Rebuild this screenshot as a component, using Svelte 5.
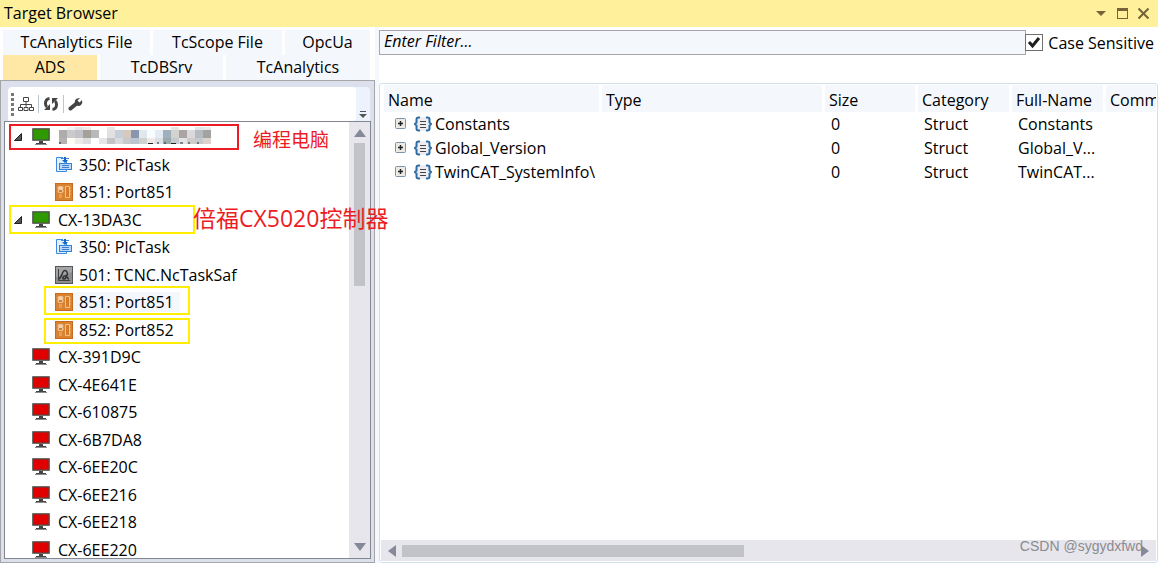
<script>
  const tabs = [
    ["TcAnalytics File", "TcScope File", "OpcUa"],
    ["ADS", "TcDBSrv", "TcAnalytics"],
  ];

  const columns = ["Name", "Type", "Size", "Category", "Full-Name", "Comm"];

  const symbols = [
    { name: "Constants", size: 0, category: "Struct", full: "Constants" },
    { name: "Global_Version", size: 0, category: "Struct", full: "Global_V..." },
    { name: "TwinCAT_SystemInfo\\", size: 0, category: "Struct", full: "TwinCAT..." },
  ];

  const nodes = [
    { kind: "online", open: true, masked: true },
    { kind: "task", label: "350: PlcTask" },
    { kind: "plc", label: "851: Port851" },
    { kind: "online", open: true, label: "CX-13DA3C" },
    { kind: "task", label: "350: PlcTask" },
    { kind: "nc", label: "501: TCNC.NcTaskSaf" },
    { kind: "plc", label: "851: Port851", hover: true },
    { kind: "plc", label: "852: Port852" },
    { kind: "offline", label: "CX-391D9C" },
    { kind: "offline", label: "CX-4E641E" },
    { kind: "offline", label: "CX-610875" },
    { kind: "offline", label: "CX-6B7DA8" },
    { kind: "offline", label: "CX-6EE20C" },
    { kind: "offline", label: "CX-6EE216" },
    { kind: "offline", label: "CX-6EE218" },
    { kind: "offline", label: "CX-6EE220" },
  ];

  // mosaic over the host name, one colour per 8px block
  const mosaic = [
    { y: 0, height: 3, colors: ["#fff", "#f4f4f4", "#e4e4e4", "#ececec", "#fff", "#fff", "#e8e8e8", "#fff", "#fff", "#fff", "#fff", "#fff", "#fff", "#fff", "#e3e6e6", "#fff", "#fff", "#e3e6e6", "#e9eaea"] },
    { y: 3, height: 8, colors: ["#adadad", "#cbc9ca", "#c3c2c8", "#a3a198", "#b8b9bb", "#fff", "#e1e1e4", "#c5ced9", "#d7c9bb", "#8798ae", "#e0e8ec", "#f8fdff", "#e3ecf2", "#9fafbd", "#d2d2cf", "#aca3a3", "#dad9dc", "#b5bbc0", "#a1a39e"] },
    { y: 11, height: 6, colors: ["#b4b1b0", "#fcfbf6", "#eeeae8", "#dcdee2", "#fff", "#e6e6ea", "#c4c4c7", "#d9dadc", "#c8c9cd", "#bac5ce", "#cfd4d2", "#f0e9e6", "#dbdfe6", "#99aaaa", "#c5cad1", "#e1e3e5", "#cfcccb", "#c5cacd", "#dfd2cc"] },
  ];

  let activeTab = $state("ADS");
  let filter = $state("");
  let caseSensitive = $state(true);
</script>

{#snippet monitor(color)}
  <svg class="icon" width="18" height="18" viewBox="0 0 18 18">
    <path d="M0 0h18v13H0z" fill="#8c8c8c" />
    <path d="M1 1h16v11H1z" fill={color} stroke="#4c4c46" />
    <path d="M7 13h4v2h3v2H4v-2h3z" fill="#444" />
    <path d="M3 16h12v1H3z" fill="#8c8c8c" />
  </svg>
{/snippet}

{#snippet nodeIcon(kind)}
  {#if kind === "online"}
    {@render monitor("#2e9a00")}
  {:else if kind === "offline"}
    {@render monitor("#e00000")}
  {:else if kind === "task"}
    <svg class="icon" width="18" height="18" viewBox="0 0 18 18">
      <path d="M1.500 1.500h10v14h-10z" fill="#e3effc" stroke="#3b8ae0" />
      <path d="M8 0h7v5H8z" fill="#fff" />
      <path d="M6 2.500h8" stroke="#3b8ae0" />
      <path d="M9 1h2v3h2l-3 3-3-3h2z" fill="#1468c4" />
      <rect x="4.500" y="7.500" width="12" height="6" fill="#b9d8f9" stroke="#2f82dc" />
      <path d="M7 9.500h7M7 11.500h7" stroke="#3f7fc8" />
    </svg>
  {:else if kind === "plc"}
    <svg class="icon" width="18" height="18" viewBox="0 0 18 18">
      <rect width="18" height="18" fill="#c8691c" />
      <rect x="1" y="1" width="16" height="16" fill="#d9822f" />
      <path d="M3.500 3.500h4v6h-4zM10.500 3.500h4v11h-4z" fill="#d77c2a" stroke="#f0c394" />
      <path d="M4 4h3v3H4z" fill="#f4d2ab" />
      <path d="M2 5h1M2 8h1M8 5h1M8 8h1M15 5h1M15 8h1M15 11h1M4 12h3M4 14h3" stroke="#f0b984" />
    </svg>
  {:else}
    <svg class="icon" width="18" height="18" viewBox="0 0 18 18">
      <rect x="0.500" y="0.500" width="17" height="17" fill="#8b8d8e" stroke="#555758" />
      <path d="M1 1h16v5L1 11z" fill="#a3a5a6" />
      <path d="M3.500 3v11.500H15" fill="none" stroke="#404243" />
      <path d="M4 13c2-1 2-3 4-7 1-2 3-2 4 0 1 3 0 4-2 4s-3 3-1 3 2-3 3-2 1 2 2 2" fill="none" stroke="#303233" stroke-width="1.500" />
    </svg>
  {/if}
{/snippet}

<div class="window">
  <header class="titlebar">
    <h1>Target Browser</h1>
    <button aria-label="Window position">
      <svg width="13" height="13" viewBox="0 0 13 13"><path d="M1 4h10l-5 5z" fill="#75633a" /></svg>
    </button>
    <button aria-label="Maximize">
      <svg width="13" height="13" viewBox="0 0 13 13"><path d="M1 1h11v11H1zM2 4v7h9V4z" fill="#75633a" fill-rule="evenodd" /></svg>
    </button>
    <button aria-label="Close">
      <svg width="13" height="13" viewBox="0 0 13 13"><path d="M1.500 1.500l10 10M11.500 1.500l-10 10" stroke="#75633a" stroke-width="2" /></svg>
    </button>
  </header>

  <div class="body">
    <aside class="targets">
      <div class="tabs" role="tablist">
        {#each tabs as row, i}
          <div class="tab-row row-{i}">
            {#each row as tab}
              <button role="tab" aria-selected={tab === activeTab} class:active={tab === activeTab} onclick={() => (activeTab = tab)}>{tab}</button>
            {/each}
          </div>
        {/each}
      </div>

      <div class="panel">
        <div class="toolbar">
          <div class="tools">
            <span class="grip"></span>
            <button aria-label="Show network">
              <svg width="16" height="16" viewBox="0 0 16 16">
                <path d="M5.500 1.500h5v4h-5zM8 6v5M2.500 11V8.500h11V11M.5 11.500h4v3h-4zM6 11.500h4v3H6zM11.500 11.500h4v3h-4z" fill="none" stroke="#454545" />
              </svg>
            </button>
            <span class="sep"></span>
            <button aria-label="Refresh">
              <svg width="16" height="16" viewBox="0 0 16 16">
                <path d="M4 11Q2.500 10 2.500 7.500q0-4.500 4-5M12 5q1.500 1 1.500 3.500 0 4.500-4 5" fill="none" stroke="#444" stroke-width="3" />
                <path d="M1 14h6V8zM15 2H9v6z" fill="#444" />
              </svg>
            </button>
            <span class="sep"></span>
            <button aria-label="Settings">
              <svg width="16" height="16" viewBox="0 0 16 16">
                <path d="M2.500 12.500L8 8" stroke="#444" stroke-width="4" stroke-linecap="round" />
                <path d="M12 2L9.500 4.500l2 2L14 4q1 3-1 5t-5 0q-2-2-1-4.500T12 2z" fill="#444" />
              </svg>
            </button>
          </div>
          <button class="overflow" aria-label="Toolbar options">
            <svg width="8" height="8" viewBox="0 0 8 8"><path d="M1 1h6v1H1zM0 4h8L4 8z" fill="#555" /></svg>
          </button>
        </div>

        <div class="tree-box">
          <ul class="tree">
            {#each nodes as node}
              <li class={node.kind}>
                <span class="twisty">
                  {#if node.open}
                    <svg width="8" height="8" viewBox="0 0 8 8"><path d="M7.500 .5v7h-7z" fill="#555" stroke="#222" /></svg>
                  {/if}
                </span>
                {@render nodeIcon(node.kind)}
                {#if node.masked}
                  <svg class="mask" width="154" height="20" viewBox="0 0 154 20">
                    {#each mosaic as row}
                      {#each row.colors as color, i}
                        <rect x={i * 8 + 1} y={row.y} width="8" height={row.height} fill={color} />
                      {/each}
                    {/each}
                    <path d="M1 16h2M90 16.500h5M99 16h2M106 16h2M113 16.500h5M122 16h3M130 16h2M139 16h2" stroke="#222" />
                  </svg>
                {:else}
                  <span class="label" class:hover={node.hover}>{node.label}</span>
                {/if}
              </li>
            {/each}
          </ul>
          <div class="scroll-y">
            <svg width="12" height="8" viewBox="0 0 12 8"><path d="M6 0l6 8H0z" fill="#868999" /></svg>
            <span class="thumb"></span>
            <svg class="down" width="12" height="8" viewBox="0 0 12 8"><path d="M0 0h12L6 8z" fill="#868999" /></svg>
          </div>
        </div>
      </div>

      <div class="note local"></div>
      <div class="note controller"></div>
      <div class="note port-a"></div>
      <div class="note port-b"></div>
      <span class="note-text local-text">编程电脑</span>
      <span class="note-text controller-text">倍福CX5020控制器</span>
    </aside>

    <main class="symbols">
      <div class="filter">
        <input type="text" aria-label="Filter" placeholder="Enter Filter..." bind:value={filter} />
        <label>
          <input type="checkbox" bind:checked={caseSensitive} />
          <svg class="tick" width="18" height="17" viewBox="0 0 18 17"><path d="M4 8l3.500 4L14 4" fill="none" stroke="#1e1e1e" stroke-width="3" /></svg>
          Case Sensitive
        </label>
      </div>

      <div class="grid-box">
        <table>
          <colgroup>
            <col class="c-name" /><col class="c-type" /><col class="c-size" />
            <col class="c-cat" /><col class="c-full" /><col />
          </colgroup>
          <thead>
            <tr>
              {#each columns as column}
                <th>{column}</th>
              {/each}
            </tr>
          </thead>
          <tbody>
            {#each symbols as symbol}
              <tr>
                <td>
                  <div class="name">
                    <button class="expand" aria-label="Expand {symbol.name}">
                      <svg width="11" height="11" viewBox="0 0 11 11">
                        <rect x="0.500" y="0.500" width="10" height="10" rx="1" fill="#eceae4" stroke="#7f93a8" />
                        <path d="M3 5.500h5M5.500 3v5" stroke="#222" stroke-width="1.500" />
                      </svg>
                    </button>
                    <svg width="18" height="16" viewBox="0 0 18 16">
                      <path d="M3 1h12v14H3z" fill="#eeeef2" />
                      <path d="M6 1.500H4.500Q2.500 1.500 2.500 3.500v3L1 8l1.500 1.500v3q0 2 2 2H6M12 1.500h1.500q2 0 2 2v3L17 8l-1.500 1.500v3q0 2-2 2H12" fill="none" stroke="#2a6da8" stroke-width="2" />
                      <path d="M6 5.500h6M6 8.500h6M6 11.500h6" stroke="#444" />
                    </svg>
                    <span>{symbol.name}</span>
                  </div>
                </td>
                <td></td>
                <td>{symbol.size}</td>
                <td>{symbol.category}</td>
                <td>{symbol.full}</td>
                <td></td>
              </tr>
            {/each}
          </tbody>
        </table>
        <div class="scroll-x">
          <svg width="8" height="12" viewBox="0 0 8 12"><path d="M8 0v12L0 6z" fill="#868999" /></svg>
          <span class="thumb"></span>
          <svg class="right" width="8" height="12" viewBox="0 0 8 12"><path d="M0 0v12l8-6z" fill="#868999" /></svg>
        </div>
      </div>
      <span class="watermark">CSDN @sygydxfwd</span>
    </main>
  </div>
</div>

<style>
  :global(body) {
    margin: 0;
  }

  .window {
    height: 100vh;
    display: flex;
    flex-direction: column;
    overflow: hidden;
    background: #fff;
    color: #000;
    font: 16px/20px "Open Sans", "Noto Sans CJK SC", sans-serif;
  }

  .window * {
    box-sizing: border-box;
  }

  button {
    padding: 0;
    border: 0;
    background: none;
    color: inherit;
    font: inherit;
  }

  svg {
    display: block;
    flex: none;
  }

  .titlebar {
    flex: none;
    height: 27px;
    display: flex;
    align-items: center;
    gap: 8px;
    padding: 0 8px 0 4px;
    background: #fff09c;
  }

  h1 {
    flex: 1;
    margin: 0;
    padding-bottom: 1px;
    font: inherit;
  }

  .body {
    flex: 1;
    min-height: 0;
    display: flex;
  }

  .targets {
    position: relative;
    flex: none;
    width: 375px;
    display: flex;
    flex-direction: column;
  }

  .tabs {
    padding: 3px 5px 0 3px;
  }

  .tab-row {
    display: grid;
    gap: 3px;
    height: 25px;
  }

  .row-0 {
    grid-template-columns: 147px 129px 1fr;
  }

  .row-1 {
    grid-template-columns: 94px 123px 1fr;
  }

  .tab-row button {
    padding-bottom: 1px;
    background: #f4f7fc;
  }

  .tab-row .active {
    background: #ffe8a6;
  }

  .panel {
    flex: 1;
    min-height: 0;
    display: flex;
    flex-direction: column;
    padding: 6px 3px 3px;
    border: 1px solid #a6a6a9;
    background: #dce0ec;
  }

  .toolbar {
    flex: none;
    height: 34px;
    display: flex;
    margin: 0 1px 0 4px;
    border-radius: 4px 4px 0 0;
    background: #edf3fd;
    overflow: hidden;
  }

  .tools {
    flex: 1;
    display: flex;
    align-items: center;
    gap: 4px;
    padding-left: 3px;
    border-radius: 4px;
    background: #fff;
  }

  .grip {
    width: 3px;
    height: 23px;
    background: repeating-linear-gradient(#777 0 3px, #fff 3px 5px);
  }

  .sep {
    width: 1px;
    height: 18px;
    background: #bfc4d2;
  }

  .overflow {
    display: flex;
    align-items: flex-end;
    justify-content: center;
    width: 14px;
    padding-bottom: 3px;
  }

  .tree-box {
    flex: 1;
    min-height: 0;
    display: flex;
    border: 1px solid #828790;
    background: #fff;
  }

  .tree {
    flex: 1;
    margin: 0;
    padding: 1px 0 0;
    overflow: hidden;
    list-style: none;
  }

  li {
    display: flex;
    align-items: center;
    height: 28px;
    padding-left: 9px;
  }

  li:nth-child(even) {
    height: 27px;
  }

  .twisty {
    width: 18px;
  }

  .task,
  .plc,
  .nc {
    padding-left: 32px;
  }

  .label {
    padding: 0 8px;
  }

  .task .label,
  .plc .label,
  .nc .label {
    padding: 0 6px;
  }

  .hover {
    background: #f4f7fc;
  }

  .mask {
    margin-left: 8px;
  }

  .scroll-y {
    display: flex;
    flex-direction: column;
    align-items: center;
    gap: 6px;
    width: 21px;
    padding: 7px 0;
    background: #e7e6ec;
  }

  .thumb {
    background: #c2c3c9;
  }

  .scroll-y .thumb {
    width: 11px;
    height: 34%;
  }

  .down {
    margin-top: auto;
  }

  .note {
    position: absolute;
    border: 2px solid #ffee00;
  }

  .local {
    top: 97px;
    left: 9px;
    width: 230px;
    height: 26px;
    border-color: #ed1c24;
  }

  .controller {
    top: 178px;
    left: 9px;
    width: 186px;
    height: 29px;
  }

  .port-a {
    top: 259px;
    left: 44px;
    width: 146px;
    height: 29px;
  }

  .port-b {
    top: 291px;
    left: 44px;
    width: 146px;
    height: 26px;
  }

  .note-text {
    position: absolute;
    z-index: 1;
    color: #ed1c24;
    white-space: nowrap;
  }

  .local-text {
    top: 101px;
    left: 253px;
    font-size: 19px;
    line-height: 24px;
  }

  .controller-text {
    top: 177px;
    left: 193px;
    font-size: 23px;
    line-height: 28px;
  }

  .symbols {
    position: relative;
    flex: 1;
    min-width: 0;
    display: flex;
    flex-direction: column;
    border-left: 4px solid #f4f7fc;
  }

  .filter {
    display: flex;
    height: 56px;
    padding-top: 3px;
  }

  input[type="text"] {
    flex: 1;
    min-width: 0;
    height: 25px;
    padding: 0 4px 3px;
    border: 1px solid #a5a6ac;
    border-radius: 0;
    background: #f4f7fc;
    font: inherit;
  }

  input::placeholder {
    color: #000;
    font-style: italic;
    opacity: 1;
  }

  label {
    position: relative;
    display: flex;
    align-items: center;
    gap: 5px;
    height: 25px;
    padding-right: 4px;
    white-space: nowrap;
  }

  input[type="checkbox"] {
    appearance: none;
    width: 18px;
    height: 17px;
    margin: 0 0 0 -1px;
    border: 1px solid #707070;
    background: #fff;
  }

  .tick {
    position: absolute;
    left: -1px;
    visibility: hidden;
    pointer-events: none;
  }

  :checked + .tick {
    visibility: visible;
  }

  .grid-box {
    flex: 1;
    min-height: 0;
    display: flex;
    flex-direction: column;
    justify-content: space-between;
    padding: 1px;
    border: 1px solid #cfe0ea;
    border-radius: 3px;
    overflow: hidden;
  }

  table {
    width: calc(100% - 3px);
    margin-left: 3px;
    table-layout: fixed;
    border-collapse: separate;
    border-spacing: 0;
  }

  .c-name {
    width: 218px;
  }

  .c-type {
    width: 223px;
  }

  .c-size {
    width: 93px;
  }

  .c-cat,
  .c-full {
    width: 94px;
  }

  th {
    height: 27px;
    padding: 3px 0 0 4px;
    border-right: 3px solid #fff;
    background: #f4f7fc;
    font-weight: normal;
    text-align: left;
    white-space: nowrap;
    overflow: hidden;
  }

  th:last-child {
    border-right: 0;
  }

  td {
    height: 24px;
    padding: 0 0 1px 6px;
    white-space: nowrap;
  }

  .name {
    display: flex;
    align-items: center;
    padding-left: 5px;
  }

  .expand {
    margin-right: 8px;
  }

  .name span {
    margin-left: 3px;
  }

  .scroll-x {
    flex: none;
    display: flex;
    align-items: center;
    gap: 6px;
    height: 21px;
    padding: 0 7px;
    background: #e7e6ec;
  }

  .scroll-x .thumb {
    width: 45%;
    height: 12px;
  }

  .right {
    margin-left: auto;
  }

  .watermark {
    position: absolute;
    right: 15px;
    bottom: 7px;
    color: #8b8b90;
    font: 14px/20px "Liberation Sans", sans-serif;
  }
</style>
